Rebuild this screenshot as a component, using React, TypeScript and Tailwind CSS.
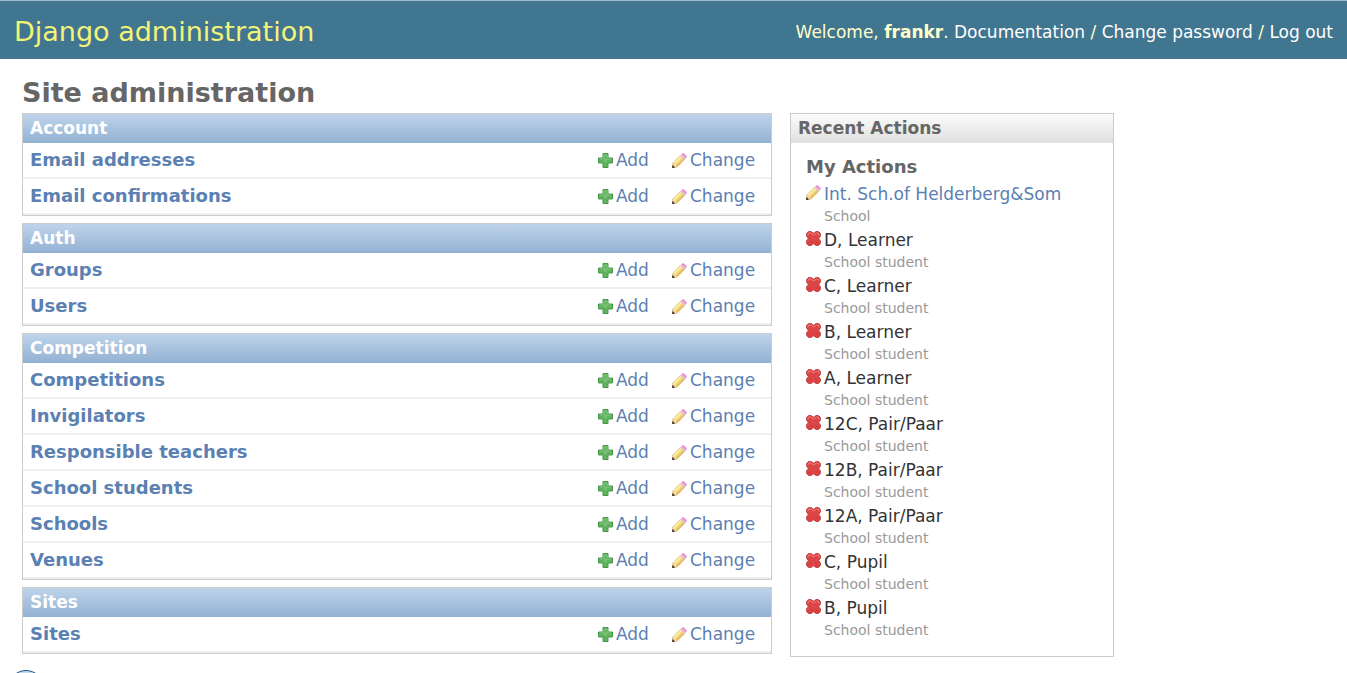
import type { ReactNode } from "react";

type Model = { name: string };
type AppGroup = { title: string; models: Model[] };
type Action = { kind: "change" | "delete"; label: string; type: string };

const groups: AppGroup[] = [
  { title: "Account", models: [{ name: "Email addresses" }, { name: "Email confirmations" }] },
  { title: "Auth", models: [{ name: "Groups" }, { name: "Users" }] },
  {
    title: "Competition",
    models: [
      { name: "Competitions" },
      { name: "Invigilators" },
      { name: "Responsible teachers" },
      { name: "School students" },
      { name: "Schools" },
      { name: "Venues" },
    ],
  },
  { title: "Sites", models: [{ name: "Sites" }] },
];

const actions: Action[] = [
  { kind: "change", label: "Int. Sch.of Helderberg&Som", type: "School" },
  { kind: "delete", label: "D, Learner", type: "School student" },
  { kind: "delete", label: "C, Learner", type: "School student" },
  { kind: "delete", label: "B, Learner", type: "School student" },
  { kind: "delete", label: "A, Learner", type: "School student" },
  { kind: "delete", label: "12C, Pair/Paar", type: "School student" },
  { kind: "delete", label: "12B, Pair/Paar", type: "School student" },
  { kind: "delete", label: "12A, Pair/Paar", type: "School student" },
  { kind: "delete", label: "C, Pupil", type: "School student" },
  { kind: "delete", label: "B, Pupil", type: "School student" },
];

function AddIcon() {
  return (
    <svg width="15" height="15" viewBox="0 0 15 15" aria-hidden="true" className="shrink-0">
      <path d="M5 .5h5V5h4.500v5H10v4.500H5V10H.5V5H5z" fill="#5fb35e" stroke="#48994a" strokeLinejoin="round" />
      <path d="M6 2h3v4h4M2 6h4V2" fill="none" stroke="#83c981" />
      <path d="M6 6h3v3H6z" fill="#74c272" />
    </svg>
  );
}

function ChangeIcon() {
  return (
    <svg width="15" height="15" viewBox="0 0 15 15" aria-hidden="true" className="shrink-0">
      <path d="M.8 10 8.500 2.300 12.700 6.500 5 14.200 .5 14.500z" fill="#f6dc84" stroke="#d2ae6c" strokeWidth=".7" />
      <path d="M2 10.300 9.300 3.200" stroke="#fcf2b4" strokeWidth="1.500" />
      <path d="M4.300 13 11.700 5.700" stroke="#e6b958" strokeWidth="1.300" />
      <path d="M1 10.300 4.700 14 .3 14.800z" fill="#ead2b8" />
      <path d="M.5 12 3 14.400 .1 15z" fill="#2c2019" />
      <path d="M8.300 2.500 9.600 1.200 13.800 5.400 12.500 6.700z" fill="#d8c6d4" />
      <path d="M9.400 1.500 10.400.6Q11.200 0 12 .6L14.400 3Q15 3.800 14.400 4.600L13.500 5.600z" fill="#ed83d3" />
      <path d="M10.800 1.900 13.300 4.200" stroke="#f6aee4" strokeWidth=".9" />
    </svg>
  );
}

function DeleteIcon() {
  return (
    <svg width="15" height="15" viewBox="0 0 15 15" aria-hidden="true" className="shrink-0">
      <path
        d="M2.500 .6H5L7.500 2.300 10 .6h2.500L14.400 2.500V5L12.700 7.500 14.400 10v2.500L12.500 14.400H10L7.500 12.700 5 14.400H2.500L.6 12.500V10L2.300 7.500.6 5V2.500z"
        fill="#dc4545"
        stroke="#c24040"
        strokeLinejoin="round"
      />
      <path d="M2 4.500V3l1-1h1.500l3 2 3-2H12l1 1v1.500" fill="none" stroke="#ec7f7f" />
      <path d="M3 12.500 5.500 10M12 12.500 9.500 10" fill="none" stroke="#cc3030" />
    </svg>
  );
}

function IconLink({ icon, children, label }: { icon: ReactNode; children: ReactNode; label: string }) {
  return (
    <a href="#" aria-label={label} className="flex items-center gap-[3px] text-[#5b80b2]">
      {icon}
      {children}
    </a>
  );
}

function Module({ group }: { group: AppGroup }) {
  return (
    <div className="border border-[#ccc]">
      <table className="w-full border-separate border-spacing-0">
        <caption className="bg-linear-to-b from-[#bfd4eb] to-[#92b1d2] px-[7px] text-left text-[17px] leading-[29px] font-bold text-white">
          {group.title}
        </caption>
        <tbody>
          {group.models.map(({ name }) => (
            <tr key={name} className="h-9">
              <th scope="row" className="border-b-2 border-[#eee] px-[7px] text-left text-[18px] leading-7 font-bold">
                <a href="#" className="text-[#5b80b2]">{name}</a>
              </th>
              <td className="w-[74px] border-b-2 border-[#eee] leading-7">
                <IconLink icon={<AddIcon />} label={`Add ${name}`}>Add</IconLink>
              </td>
              <td className="w-[99px] border-b-2 border-[#eee] leading-7">
                <IconLink icon={<ChangeIcon />} label={`Change ${name}`}>Change</IconLink>
              </td>
            </tr>
          ))}
        </tbody>
      </table>
    </div>
  );
}

export default function App() {
  return (
    <div className="relative h-screen overflow-hidden bg-white font-['DejaVu_Sans',Verdana,sans-serif] text-[17px] text-[#333]">
      <header className="flex h-[59px] items-center justify-between border-t border-[#a3b9d0] bg-[#417690] px-[14px] pt-1 text-[#ffc]">
        <div className="text-[27px] text-[#f4f379]">Django administration</div>
        <nav className="pt-px text-[17px]">
          Welcome, <strong>frankr</strong>. <a href="#" className="text-white">Documentation</a> /{" "}
          <a href="#" className="text-white">Change password</a> / <a href="#" className="text-white">Log out</a>
        </nav>
      </header>
      <main className="px-[22px] pt-[14px]">
        <h1 className="pb-px text-[27px] leading-[39px] font-bold text-[#666]">Site administration</h1>
        <div className="flex items-start gap-[18px]">
          <div className="flex max-w-[750px] flex-1 flex-col gap-[7px]">
            {groups.map((g) => (
              <Module key={g.title} group={g} />
            ))}
          </div>
          <aside className="w-[324px] border border-[#ccc] pb-[15px]">
            <h2 className="bg-linear-to-b from-[#fcfcfc] to-[#dfdfdf] px-[7px] text-[17px] leading-[29px] font-bold text-[#666]">
              Recent Actions
            </h2>
            <h3 className="px-[15px] pt-[10px] text-[18px] leading-7 font-bold text-[#666]">My Actions</h3>
            <ul className="px-[15px]">
              {actions.map(({ kind, label, type }) => (
                <li key={label} className="flex h-[46px] items-start gap-[3px]">
                  <span className="pt-1">{kind === "change" ? <ChangeIcon /> : <DeleteIcon />}</span>
                  <div>
                    <div className="leading-[26px]">
                      {kind === "change" ? <a href="#" className="text-[#5b80b2]">{label}</a> : label}
                    </div>
                    <div className="text-[14px] leading-[18px] text-[#999]">{type}</div>
                  </div>
                </li>
              ))}
            </ul>
          </aside>
        </div>
      </main>
      <div className="absolute -bottom-[33px] left-2 size-9 rounded-full border border-[#1d5487] bg-[#c3dcec]" />
    </div>
  );
}
